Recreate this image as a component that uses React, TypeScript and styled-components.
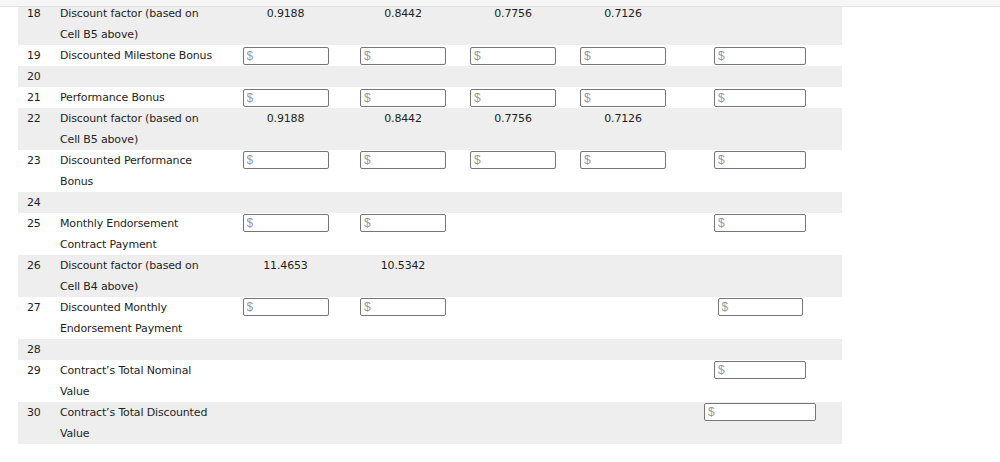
import React from "react"
import styled, { createGlobalStyle } from "styled-components"

type Cell = null | { value: string } | { input: number }

type RowData = {
	num: number,
	label: string[],
	cells: Cell[],
}

const GlobalStyle = createGlobalStyle`
	html, body {
		margin: 0;
		padding: 0;
		background: #ffffff;
	}
	body {
		font-family: "DejaVu Sans", Verdana, sans-serif;
		font-size: 11px;
		letter-spacing: -0.15px;
		color: #1e1e1e;
	}
`

const PageElement = styled.div`
	width: 1000px;
	height: 462px;
	overflow: hidden;
	display: flex;
	flex-direction: column;
`

const TopBarElement = styled.div`
	height: 6px;
	flex-shrink: 0;
	background: #f6f6f6;
	border-bottom: 1px solid #e2e2e2;
`

const ScrollAreaElement = styled.div`
	flex-grow: 1;
	overflow: hidden;
	padding-left: 18px;
`

const TableElement = styled.div`
	width: 824px;
	margin-top: -4px;
	display: flex;
	flex-direction: column;
`

const RowElement = styled.div<{ $shaded: boolean }>`
	display: grid;
	grid-template-columns: 34px 174px 119px 116px 104px 116px 158px 3px;
	background: ${props => props.$shaded ? "#eeeeee" : "#ffffff"};
	line-height: 21px;
`

const NumCellElement = styled.div`
	padding-left: 9px;
`

const LabelCellElement = styled.div`
	padding-left: 8px;
	display: flex;
	flex-direction: column;
	white-space: nowrap;
`

const ValueCellElement = styled.div`
	text-align: center;
`

const InputCellElement = styled.div<{ $double: boolean }>`
	display: flex;
	justify-content: center;
	align-items: flex-start;
	padding-top: ${props => props.$double ? "1px" : "2px"};
`

const MoneyInputElement = styled.input`
	box-sizing: border-box;
	height: 18px;
	margin: 0;
	padding: 0 3px;
	border: 1px solid #767676;
	border-radius: 2px;
	background: #ffffff;
	font-family: "Liberation Sans", Arial, sans-serif;
	font-size: 12px;
	letter-spacing: 0;
	color: #222222;

	&::placeholder {
		color: #9a9a9a;
	}
`

const factors = [{ value: "0.9188" }, { value: "0.8442" }, { value: "0.7756" }, { value: "0.7126" }, null]
const allInputs = [{ input: 86 }, { input: 86 }, { input: 86 }, { input: 86 }, { input: 92 }]

const rows: RowData[] = [
	{ num: 18, label: ["Discount factor (based on", "Cell B5 above)"], cells: factors },
	{ num: 19, label: ["Discounted Milestone Bonus"], cells: allInputs },
	{ num: 20, label: [], cells: [] },
	{ num: 21, label: ["Performance Bonus"], cells: allInputs },
	{ num: 22, label: ["Discount factor (based on", "Cell B5 above)"], cells: factors },
	{ num: 23, label: ["Discounted Performance", "Bonus"], cells: allInputs },
	{ num: 24, label: [], cells: [] },
	{ num: 25, label: ["Monthly Endorsement", "Contract Payment"], cells: [{ input: 86 }, { input: 86 }, null, null, { input: 92 }] },
	{ num: 26, label: ["Discount factor (based on", "Cell B4 above)"], cells: [{ value: "11.4653" }, { value: "10.5342" }, null, null, null] },
	{ num: 27, label: ["Discounted Monthly", "Endorsement Payment"], cells: [{ input: 86 }, { input: 86 }, null, null, { input: 85 }] },
	{ num: 28, label: [], cells: [] },
	{ num: 29, label: ["Contract\u2019s Total Nominal", "Value"], cells: [null, null, null, null, { input: 92 }] },
	{ num: 30, label: ["Contract\u2019s Total Discounted", "Value"], cells: [null, null, null, null, { input: 112 }] },
]

function TableCell({ cell, double }: { cell: Cell, double: boolean }) {
	if (!cell) return <div />
	if ("value" in cell) return <ValueCellElement>{cell.value}</ValueCellElement>
	return (
		<InputCellElement $double={double}>
			<MoneyInputElement placeholder="$" style={{ width: cell.input }} />
		</InputCellElement>
	)
}

function TableRow({ row, index }: { row: RowData, index: number }) {
	const double = row.label.length > 1
	return (
		<RowElement $shaded={index % 2 === 0}>
			<NumCellElement>{row.num}</NumCellElement>
			<LabelCellElement>
				{row.label.map(line => <span key={line}>{line}</span>)}
			</LabelCellElement>
			{[0, 1, 2, 3, 4].map(i => <TableCell key={i} cell={row.cells[i] ?? null} double={double} />)}
			<div />
		</RowElement>
	)
}

export default function App() {
	return (
		<PageElement>
			<GlobalStyle />
			<TopBarElement />
			<ScrollAreaElement>
				<TableElement>
					{rows.map((row, index) => <TableRow key={row.num} row={row} index={index} />)}
				</TableElement>
			</ScrollAreaElement>
		</PageElement>
	)
}
